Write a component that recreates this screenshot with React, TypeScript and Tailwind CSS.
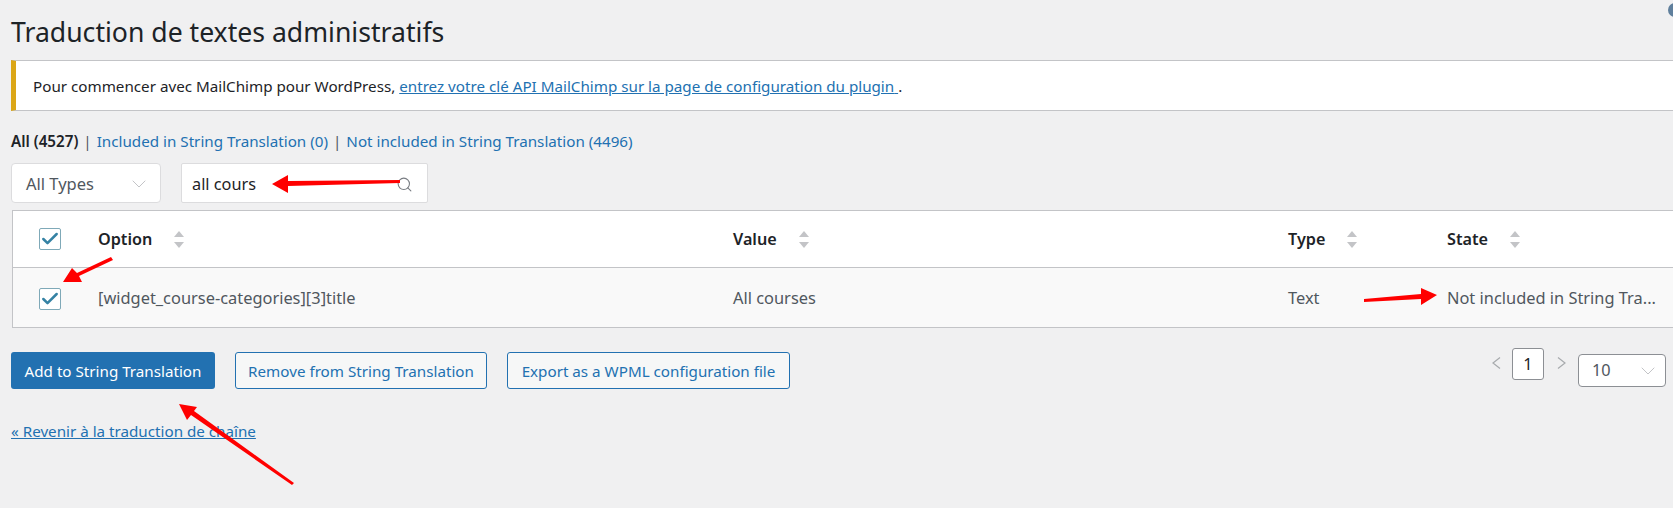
import React, { FC } from "react";
import { Search, ChevronDown, Check } from "lucide-react";

const SortIcon: FC = () => (
  <svg className="ml-[22px] mt-[2px]" width="10" height="18" viewBox="0 0 10 18" fill="#c3c4c7">
    <path d="M5 0 L10 6 H0 Z" />
    <path d="M0 11 H10 L5 17 Z" />
  </svg>
);

const Checkbox: FC = () => (
  <div className="w-[22px] h-[22px] bg-white border border-[#7fa9b8] rounded-[2px] flex items-center justify-center">
    <Check className="text-[#3582a4]" size={20} strokeWidth={3} />
  </div>
);

const HeadCell: FC<{ label: string; className: string }> = ({ label, className }) => (
  <div className={`flex items-center ${className}`}>
    <span className="font-semibold text-[#1d2327]">{label}</span>
    <SortIcon />
  </div>
);

const PageArrow: FC<{ d: string; className: string }> = ({ d, className }) => (
  <svg className={className} width="9" height="12" viewBox="0 0 9 12" fill="none" stroke="#a7aaad" strokeWidth="1.2">
    <path d={d} />
  </svg>
);

const Arrows: FC = () => (
  <svg className="absolute top-0 left-0 pointer-events-none" width="1673" height="508" fill="#ff0000">
    {/* search */}
    <polygon points="272,184 288,175 288,181 400,180 400,183 288,186 288,193" />
    {/* checkbox */}
    <polygon points="63,282 72,268 77,273 111,257 113,260 79,276 82,282" />
    {/* state */}
    <polygon points="1437,295 1421,288 1421,294 1364,299 1364,302 1421,299 1421,305" />
    {/* button */}
    <polygon points="179,404 197,407 194,411 294,483 292,485 191,415 187,420" />
  </svg>
);

export default function App() {
  return (
    <div className="relative w-[1673px] h-[508px] overflow-hidden bg-[#f0f0f1] text-[15.2px] text-[#1d2327] font-['Noto_Sans',sans-serif]">
      <div className="absolute -right-[9px] top-[3px] w-[14px] h-[14px] rounded-full bg-[#5f7f9c]" />

      <div className="pl-[11px] flex flex-col">
        <h1 className="pt-[13px] text-[26.6px] leading-[38px] font-normal">
          Traduction de textes administratifs
        </h1>

        <div className="mt-[9px] h-[51px] flex items-center bg-white border border-[#c3c4c7] border-l-[5px] border-l-[#dba617] border-r-0 pl-[17px] pt-[2px]">
          <p>
            Pour commencer avec MailChimp pour WordPress,{" "}
            <a className="text-[#2271b1] underline" href="#">
              entrez votre clé API MailChimp sur la page de configuration du plugin{" "}
            </a>
            .
          </p>
        </div>

        <div className="mt-[19px] h-[22px] flex items-center text-[#50575e]">
          <span className="font-semibold text-[#1d2327]">All (4527)</span>
          <span className="mx-[5px]">|</span>
          <a className="text-[#2271b1]" href="#">Included in String Translation (0)</a>
          <span className="mx-[5px]">|</span>
          <a className="text-[#2271b1]" href="#">Not included in String Translation (4496)</a>
        </div>

        <div className="mt-[11px] flex gap-[20px]">
          <div className="w-[150px] h-[40px] flex items-center justify-between bg-white border border-[#dcdcde] rounded-[4px] pl-[14px] pr-[9px] pt-[2px] text-[#50575e] text-[16.5px]">
            <span>All Types</span>
            <ChevronDown className="text-[#c3c4c7]" size={24} strokeWidth={1} />
          </div>
          <div className="w-[247px] h-[40px] flex items-center justify-between bg-white border border-[#dcdcde] rounded-[2px] pl-[10px] pr-[14px] pt-[2px] text-[16.3px]">
            <span>all cours</span>
            <Search className="text-[#787c82]" size={17} strokeWidth={1.5} />
          </div>
        </div>

        <div className="mt-[7px] ml-[1px] bg-white border border-[#c3c4c7] border-r-0">
          <div className="h-[57px] flex items-center border-b border-[#c3c4c7] text-[16.2px]">
            <div className="w-[85px] pl-[26px]"><Checkbox /></div>
            <HeadCell label="Option" className="w-[635px]" />
            <HeadCell label="Value" className="w-[555px]" />
            <HeadCell label="Type" className="w-[159px]" />
            <HeadCell label="State" className="flex-1" />
          </div>
          <div className="h-[59px] pt-[2px] flex items-center bg-[#f9f9f9] text-[#50575e] text-[16.4px]">
            <div className="w-[85px] pl-[26px]"><Checkbox /></div>
            <div className="w-[635px]">[widget_course-categories][3]title</div>
            <div className="w-[555px]">All courses</div>
            <div className="w-[159px]">Text</div>
            <div className="flex-1 truncate">Not included in String Tra...</div>
          </div>
        </div>

        <div className="mt-[24px] pr-[7px] flex items-start">
          <button className="w-[204px] h-[37px] pt-[2px] bg-[#2271b1] text-white rounded-[3px]">Add to String Translation</button>
          <button className="ml-[20px] w-[252px] h-[37px] pt-[2px] bg-[#f6f7f7] text-[#2271b1] border border-[#2271b1] rounded-[3px]">Remove from String Translation</button>
          <button className="ml-[20px] w-[283px] h-[37px] pt-[2px] bg-[#f6f7f7] text-[#2271b1] border border-[#2271b1] rounded-[3px]">Export as a WPML configuration file</button>
          <div className="ml-auto -mt-[4px] flex items-start">
            <PageArrow d="M8 0.5 L1 6 L8 11.5" className="mt-[9px]" />
            <div className="ml-[11px] w-[32px] h-[32px] flex items-center justify-center bg-white border border-[#8c8f94] rounded-[3px] text-[16.3px]">1</div>
            <PageArrow d="M1 0.5 L8 6 L1 11.5" className="ml-[13px] mt-[9px]" />
            <div className="ml-[12px] mt-[6px] w-[88px] h-[33px] flex items-center justify-between bg-white border border-[#8c8f94] rounded-[4px] pl-[13px] pr-[5px] text-[16.3px] text-[#50575e]">
              <span>10</span>
              <ChevronDown className="text-[#c3c4c7]" size={24} strokeWidth={1} />
            </div>
          </div>
        </div>

        <a className="mt-[31px] self-start text-[#2271b1] underline" href="#">« Revenir à la traduction de chaîne</a>
      </div>

      <Arrows />
    </div>
  );
}
